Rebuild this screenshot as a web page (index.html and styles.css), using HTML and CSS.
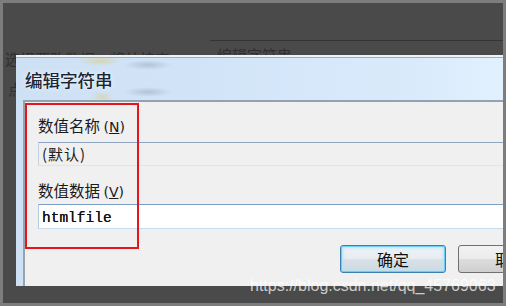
FILE: index.html
```html
<!DOCTYPE html>
<html lang="zh-CN">
<head>
  <meta charset="UTF-8" />
  <meta name="viewport" content="width=device-width, initial-scale=1.0"/>
  <title>编辑字符串</title>
  <link rel="stylesheet" href="styles.css">
</head>
<body>

  <div class="screen">
    <!-- desktop behind the dialog -->
    <div class="desk">
      <div class="desk-left">
        <div class="desk-text">选择要改数据，将杜按安</div>
        <div class="desk-text desk-point">点</div>
      </div>
      <div class="desk-right">
        <div class="desk-text">编辑字符串</div>
      </div>
    </div>

    <!-- dialog window -->
    <div class="dialog">
      <div class="titlebar">编辑字符串</div>
      <div class="client">
        <label class="field-label" for="value-name">数值名称 <span class="key">(<u>N</u>)</span></label>
        <div class="textbox readonly" id="value-name">(默认)</div>

        <label class="field-label" for="value-data">数值数据 <span class="key">(<u>V</u>)</span></label>
        <div class="textbox data" id="value-data"><span class="data-text">htmlfile</span></div>

        <div class="buttons">
          <button class="btn default">确定</button>
          <button class="btn">取消</button>
        </div>

        <div class="mark"></div>
      </div>
    </div>

    <div class="watermark">https://blog.csdn.net/qq_45769063</div>
  </div>

</body>
</html>
```

FILE: styles.css
```css
body {
  margin: 0;
  padding: 0;
  font-family: "Noto Sans CJK SC", sans-serif;
}

.screen {
  position: relative;
  width: 506px;
  height: 306px;
  box-sizing: border-box;
  border: 3px solid #7d7d7d;
  background-color: #4a4a4a;
  overflow: hidden;
}

/* faint desktop content */
.desk {
  display: grid;
  grid-template-columns: 207px 1fr;
}

.desk-text {
  font-size: 15px;
  line-height: 14px;
  color: #2f2f2f;
  white-space: nowrap;
}

.desk-left {
  padding: 49px 0 0 2px;
}

.desk-point {
  margin-top: 16px;
  padding-left: 3px;
}

.desk-right {
  margin-top: 37px;
  border-top: 1px solid #343434;
  padding: 7px 0 0 7px;
}

/* dialog */
.dialog {
  position: absolute;
  left: 13px;
  top: 52px;
  width: 560px;
  height: 231px;
  box-sizing: border-box;
  display: flex;
  flex-direction: column;
  padding-left: 7px;
  border-top: 2px solid #eef2f6;
  background:
    radial-gradient(ellipse 22px 5px at 84px 4px, rgba(225, 195, 90, 0.45), transparent),
    radial-gradient(ellipse 12px 6px at 86px 40px, rgba(225, 195, 90, 0.35), transparent),
    radial-gradient(ellipse 24px 5px at 132px 8px, rgba(70, 80, 95, 0.22), transparent),
    radial-gradient(ellipse 24px 5px at 132px 35px, rgba(70, 80, 95, 0.22), transparent),
    linear-gradient(to right, #cde0f4 0, #d2e5f8 35%, #d9eafb 70%, #e1f0fd 86%, #eaf4fc 92%, #d6e7f6 100%);
}

.titlebar {
  height: 43px;
  box-sizing: border-box;
  border-top: 1px solid #a2aebb;
  margin-left: -7px;
  padding: 11px 0 0 9px;
  font-size: 17.5px;
  line-height: 22px;
  color: #1d2431;
  text-shadow: 0 0 6px rgba(255, 255, 255, 0.9), 0 0 0.4px #1d2431;
}

.client {
  position: relative;
  flex: 1;
  background-color: #f0f0f0;
  border-top: 2px solid #93a1b1;
  border-left: 2px solid #9aa3ad;
  padding: 13px 0 0 13px;
}

.field-label {
  display: block;
  height: 20px;
  font-size: 15.5px;
  line-height: 20px;
  color: #1a1a1a;
  white-space: nowrap;
}

.key {
  font-family: "DejaVu Sans", sans-serif;
  font-size: 14px;
}

.textbox {
  width: 500px;
  height: 24px;
  box-sizing: border-box;
  margin: 7px 0 14px;
  padding: 0 3px;
  border: 1px solid;
  border-color: #8ea6bf #c4d5e7 #dae6f1 #c2d3e5;
  background-color: #f0f0f0;
  font-size: 15px;
  line-height: 22px;
  letter-spacing: 1px;
  color: #1a1a1a;
  white-space: nowrap;
}

.textbox.data {
  height: 25px;
  margin: 4px 0 0;
  background-color: #fff;
  border-color: #7aa0c8 #b9cfe5 #c9dcee #b4cbe2;
  letter-spacing: 0;
}

.data-text {
  font-family: "Liberation Mono", monospace;
  font-size: 14.5px;
  line-height: 23px;
  color: #111;
  text-shadow: 0 0 0.6px #111;
}

.buttons {
  display: flex;
  gap: 12px;
  margin-top: 16px;
  padding-left: 302px;
}

.btn {
  flex: none;
  width: 106px;
  height: 28px;
  padding: 0;
  border: 1px solid #707070;
  border-radius: 3px;
  background: linear-gradient(#f2f2f2, #ebebeb 50%, #dddddd 50%, #cfcfcf);
  font-family: "Noto Sans CJK SC", sans-serif;
  font-size: 16px;
  color: #111;
}

.btn.default {
  border-color: #3c7fb1;
  box-shadow: inset 0 0 0 1px #6fcdf5, inset 0 0 3px 2px #b3e4f8;
  background: linear-gradient(#eef3f6, #e6ecf0 50%, #d9e1e7 50%, #cfd9e1);
}

/* red annotation box */
.mark {
  position: absolute;
  left: 0;
  top: 1px;
  width: 114px;
  height: 146px;
  box-sizing: border-box;
  border: 2px solid #e8141c;
}

.watermark {
  position: absolute;
  left: 247px;
  top: 274px;
  font-family: "Liberation Sans", Arial, sans-serif;
  font-size: 16px;
  line-height: 18px;
  color: rgba(255, 255, 255, 0.72);
  white-space: nowrap;
}
```
